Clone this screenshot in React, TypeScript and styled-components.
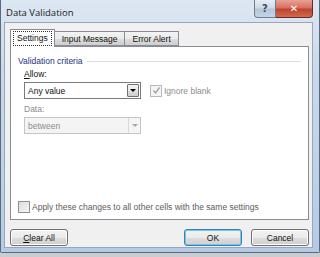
import React from "react";
import styled, { createGlobalStyle } from "styled-components";

const GlobalStyle = createGlobalStyle`
  html, body { margin: 0; padding: 0; }
  body {
    width: 320px;
    height: 257px;
    overflow: hidden;
    background: #c9ccd1;
    font-family: "Liberation Sans", Arial, sans-serif;
  }
`;

const Window = styled.div`
  box-sizing: border-box;
  width: 320px;
  height: 253px;
  border: 1px solid #5b6b7e;
  border-top: none;
  border-radius: 0 0 2px 2px;
  background: linear-gradient(180deg, #dde7f2 0%, #c8d9ec 30%, #b5cbe5 100%);
  display: flex;
  flex-direction: column;
  padding: 0 6px 4px 3px;
`;

const TitleBar = styled.div`
  height: 22px;
  display: flex;
  align-items: flex-start;
  justify-content: space-between;
`;

const Title = styled.span`
  font-family: "Open Sans", "Liberation Sans", sans-serif;
  font-size: 9.5px;
  color: #1a1a1a;
  margin: 6px 0 0 2px;
`;

const Caption = styled.div`
  display: flex;
`;

const CapButton = styled.div<{ $close?: boolean }>`
  box-sizing: border-box;
  width: ${(p) => (p.$close ? 37 : 22)}px;
  height: 18px;
  display: flex;
  align-items: center;
  justify-content: center;
  border: 1px solid ${(p) => (p.$close ? "#6d2a25" : "#6e7d90")};
  border-top: none;
  border-left-width: ${(p) => (p.$close ? 0 : 1)}px;
  border-radius: ${(p) => (p.$close ? "0 0 4px 0" : "0 0 0 4px")};
  background: ${(p) =>
    p.$close
      ? "linear-gradient(180deg, #e8a396 0%, #d7705f 45%, #c3412f 55%, #cf6a4f 100%)"
      : "linear-gradient(180deg, #e6eef7 0%, #cfdbe8 45%, #b5c6da 55%, #c5d5e6 100%)"};
  color: ${(p) => (p.$close ? "#fff" : "#3c4c60")};
  font-family: "DejaVu Sans", sans-serif;
  font-weight: bold;
  font-size: 10px;
  line-height: 1;
`;

const Client = styled.div`
  flex: 1;
  background: #f0f0f0;
  border: 1px solid #97a6b8;
  display: flex;
  flex-direction: column;
  padding: 6px 4px 0 5px;
`;

const TabStrip = styled.div`
  display: flex;
  align-items: flex-end;
  height: 17px;
  position: relative;
  z-index: 1;
  margin-left: 1px;
`;

const Tab = styled.div<{ $active?: boolean }>`
  box-sizing: border-box;
  height: ${(p) => (p.$active ? 18 : 15)}px;
  margin-bottom: ${(p) => (p.$active ? -1 : 0)}px;
  padding: 0 ${(p) => (p.$active ? 2 : 7)}px;
  display: flex;
  align-items: center;
  border: 1px solid #898c95;
  border-bottom: ${(p) => (p.$active ? "none" : "1px solid #898c95")};
  margin-right: -1px;
  background: ${(p) => (p.$active ? "#fff" : "linear-gradient(180deg, #f3f3f3 0%, #ebebeb 50%, #dddddd 51%, #cfcfcf 100%)")};
  font-size: 8.5px;
  color: #111;
  ${(p) => (p.$active ? "margin-left: -1px; z-index: 2;" : "")}
`;

const Focus = styled.span`
  border: 1px dotted #333;
  padding: 2px 3px;
  line-height: 9px;
`;

const Panel = styled.div`
  box-sizing: border-box;
  width: 299px;
  height: 174px;
  background: #fff;
  border: 1px solid #898c95;
  padding: 9px 7px 0 7px;
  display: flex;
  flex-direction: column;
`;

const GroupHeader = styled.div`
  display: flex;
  align-items: center;
  gap: 4px;
  font-size: 8.5px;
  color: #1e3287;
  height: 10px;
  &::after {
    content: "";
    flex: 1;
    height: 1px;
    background: #d5dfe5;
  }
`;

const Group = styled.div`
  display: flex;
  flex-direction: column;
  padding-left: 6px;
`;

const Label = styled.div<{ $disabled?: boolean }>`
  font-size: 8.5px;
  color: ${(p) => (p.$disabled ? "#8d8d8d" : "#111")};
  height: 10px;
  margin-top: ${(p) => (p.$disabled ? 5 : 3)}px;
`;

const Row = styled.div`
  display: flex;
  align-items: center;
  gap: 9px;
  margin-top: 3px;
`;

const Select = styled.div<{ $disabled?: boolean }>`
  box-sizing: border-box;
  width: 117px;
  height: 17px;
  border: 1px solid ${(p) => (p.$disabled ? "#c5c5c5" : "#7a7a7a")};
  background: ${(p) => (p.$disabled ? "#f4f4f4" : "#fff")};
  display: flex;
  align-items: stretch;
  font-size: 8.5px;
  color: ${(p) => (p.$disabled ? "#8d8d8d" : "#111")};
`;

const SelectText = styled.div`
  flex: 1;
  display: flex;
  align-items: center;
  padding-left: 3px;
`;

const DropButton = styled.div<{ $disabled?: boolean }>`
  box-sizing: border-box;
  width: 12px;
  display: flex;
  align-items: center;
  justify-content: center;
  border-left: 1px solid ${(p) => (p.$disabled ? "#d8d8d8" : "#707070")};
  background: ${(p) =>
    p.$disabled ? "#f4f4f4" : "linear-gradient(180deg, #f2f2f2 0%, #ebebeb 50%, #dddddd 51%, #cfcfcf 100%)"};
  ${(p) => (p.$disabled ? "" : "margin: 1px; border: 1px solid #707070; border-radius: 1px;")}
`;

const Arrow = styled.div<{ $disabled?: boolean }>`
  width: 0;
  height: 0;
  border-left: 3px solid transparent;
  border-right: 3px solid transparent;
  border-top: 3px solid ${(p) => (p.$disabled ? "#a8a8a8" : "#000")};
`;

const CheckRow = styled.label<{ $disabled?: boolean }>`
  display: flex;
  align-items: center;
  gap: 2px;
  font-size: 8.5px;
  color: ${(p) => (p.$disabled ? "#8d8d8d" : "#5c5c5c")};
`;

const Box = styled.span<{ $disabled?: boolean }>`
  box-sizing: border-box;
  width: 12px;
  height: 12px;
  border: 1px solid ${(p) => (p.$disabled ? "#b8b8b8" : "#8f8f8f")};
  background: ${(p) => (p.$disabled ? "#f4f4f4" : "linear-gradient(135deg, #dcdcdc 0%, #f6f6f6 100%)")};
  display: flex;
  align-items: center;
  justify-content: center;
`;

const Spacer = styled.div`
  flex: 1;
`;

const BottomCheck = styled.div`
  margin-bottom: 6px;
`;

const ButtonRow = styled.div`
  display: flex;
  align-items: center;
  margin-top: 9px;
  width: 299px;
`;

const Button = styled.button<{ $default?: boolean; $gap?: number }>`
  box-sizing: border-box;
  width: 58px;
  height: 17px;
  margin-left: ${(p) => p.$gap ?? 0}px;
  border: 1px solid ${(p) => (p.$default ? "#3c7fb1" : "#707070")};
  border-radius: 3px;
  background: linear-gradient(180deg, #f2f2f2 0%, #ebebeb 50%, #dddddd 51%, #cfcfcf 100%);
  box-shadow: ${(p) => (p.$default ? "inset 0 0 0 1px #6ec9f0" : "inset 0 0 0 1px #fcfcfc")};
  font-family: "Liberation Sans", Arial, sans-serif;
  font-size: 8.5px;
  color: #111;
  padding: 0;
  display: flex;
  align-items: center;
  justify-content: center;
`;

const U = styled.span`
  text-decoration: underline;
`;

const Check = ({ color }: { color: string }) => (
  <svg width="9" height="9" viewBox="0 0 9 9">
    <path d="M1.5 4.5 L3.6 7 L7.5 1.5" fill="none" stroke={color} strokeWidth="1.3" />
  </svg>
);

export default function App() {
  return (
    <>
      <GlobalStyle />
      <Window>
        <TitleBar>
          <Title>Data Validation</Title>
          <Caption>
            <CapButton>?</CapButton>
            <CapButton $close>✕</CapButton>
          </Caption>
        </TitleBar>
        <Client>
          <TabStrip>
            <Tab $active>
              <Focus>Settings</Focus>
            </Tab>
            <Tab>Input Message</Tab>
            <Tab>Error Alert</Tab>
          </TabStrip>
          <Panel>
            <GroupHeader>Validation criteria</GroupHeader>
            <Group>
              <Label>
                <U>A</U>llow:
              </Label>
              <Row>
                <Select>
                  <SelectText>Any value</SelectText>
                  <DropButton>
                    <Arrow />
                  </DropButton>
                </Select>
                <CheckRow $disabled>
                  <Box $disabled>
                    <Check color="#a0a0a0" />
                  </Box>
                  Ignore blank
                </CheckRow>
              </Row>
              <Label $disabled>Data:</Label>
              <Row>
                <Select $disabled>
                  <SelectText>between</SelectText>
                  <DropButton $disabled>
                    <Arrow $disabled />
                  </DropButton>
                </Select>
              </Row>
            </Group>
            <Spacer />
            <BottomCheck>
              <CheckRow>
                <Box />
                Apply these changes to all other cells with the same settings
              </CheckRow>
            </BottomCheck>
          </Panel>
          <ButtonRow>
            <Button>
              <U>C</U>lear All
            </Button>
            <Spacer />
            <Button $default>OK</Button>
            <Button $gap={9}>Cancel</Button>
          </ButtonRow>
        </Client>
      </Window>
    </>
  );
}
